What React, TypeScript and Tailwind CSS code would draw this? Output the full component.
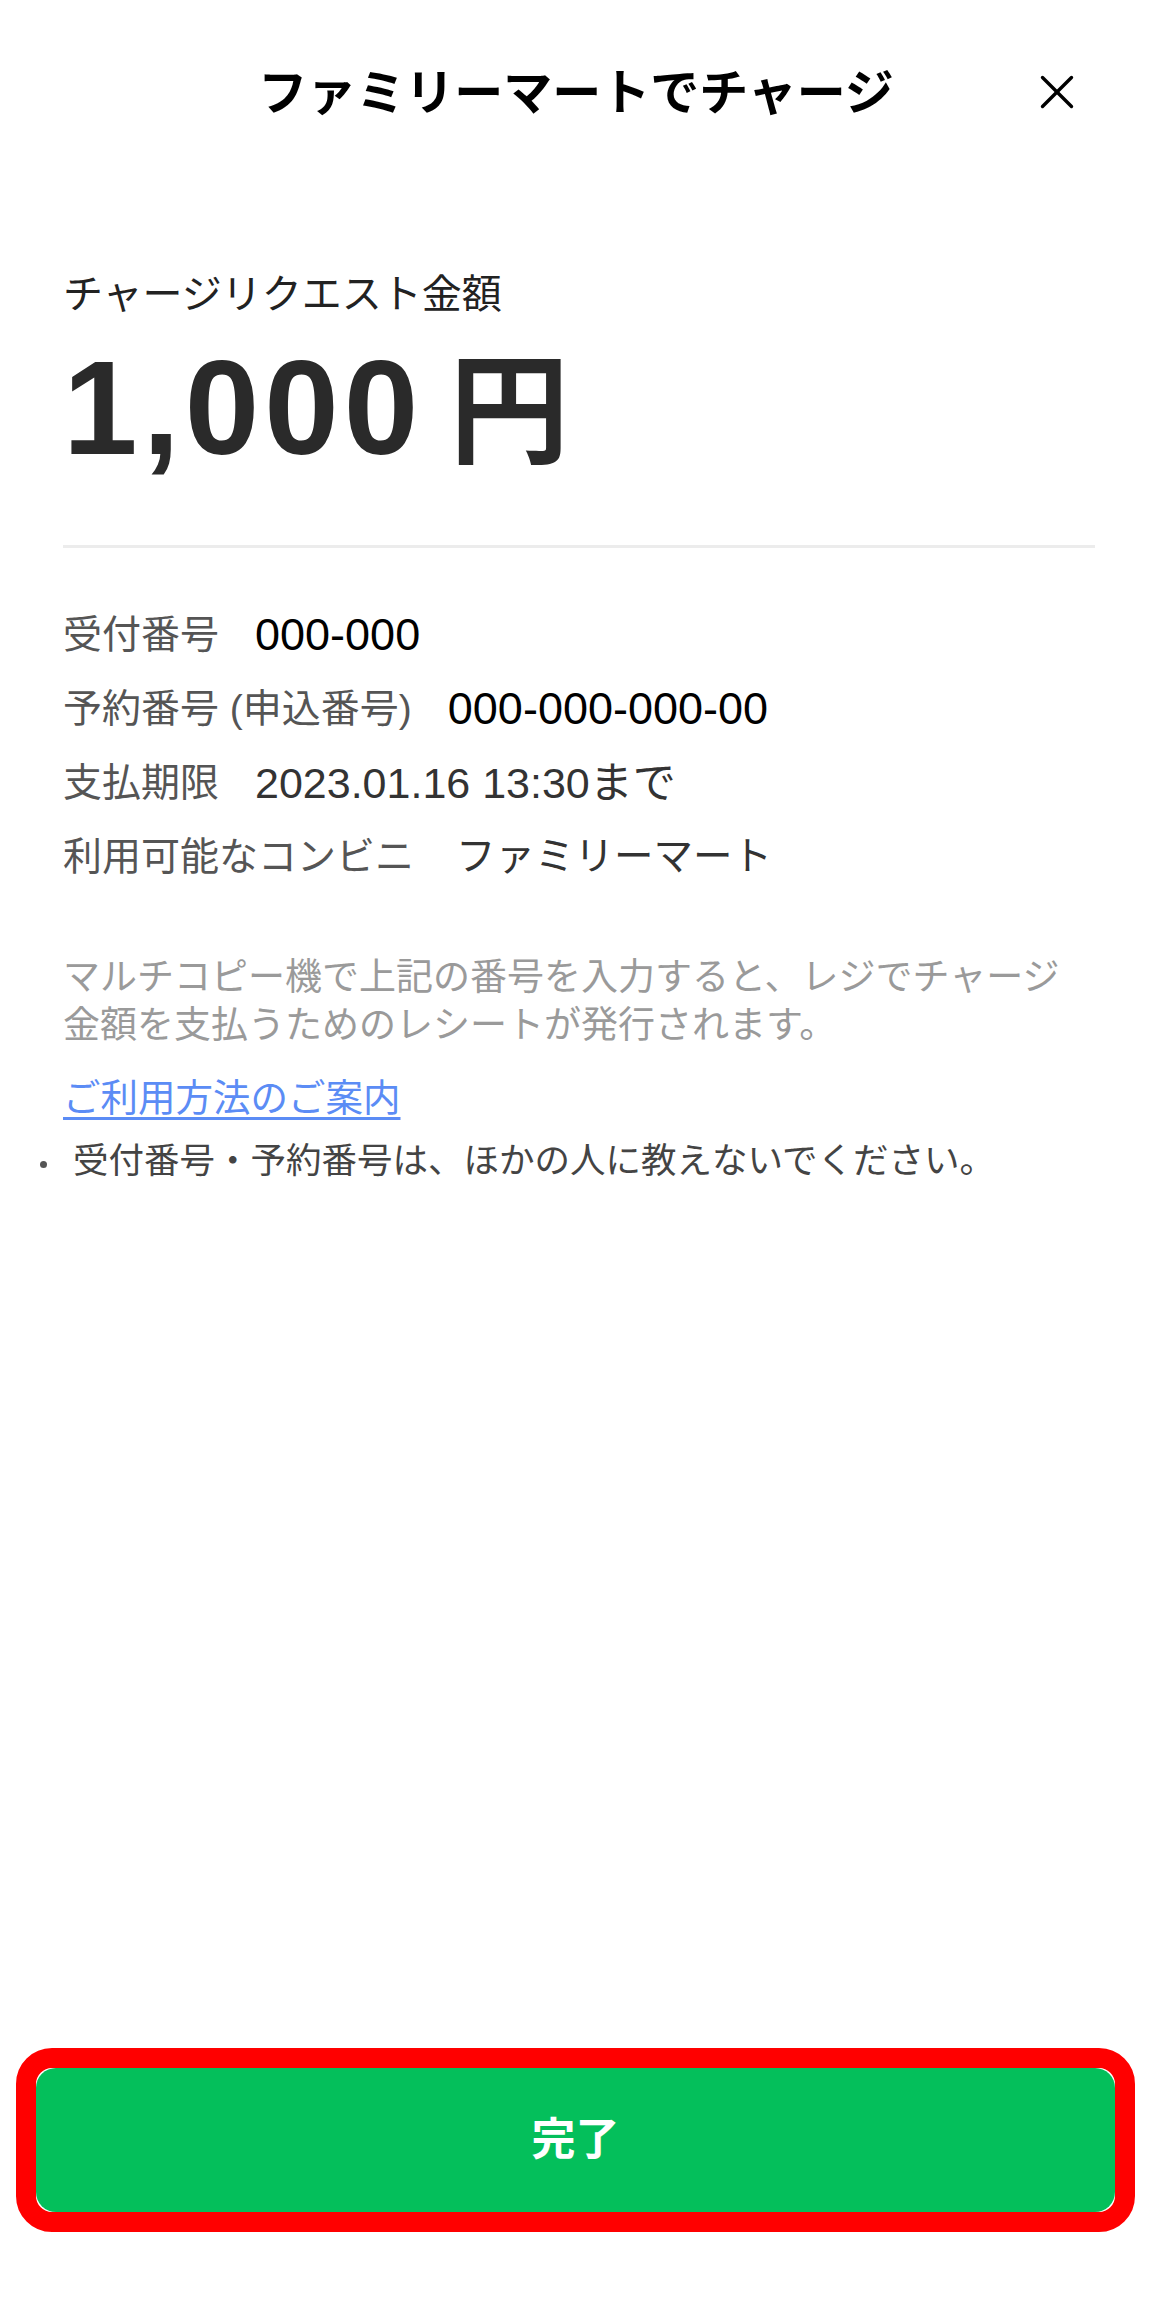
import { X } from 'lucide-react'

const font = 'font-["Liberation_Sans","Noto_Sans_CJK_JP",sans-serif]'

export default function App() {
  return (
    <div className={`${font} flex min-h-[2318px] flex-col bg-white text-[#222]`}>
      {/* Header */}
      <header className="relative flex h-[186px] items-center justify-center">
        <h1 className="text-[49px] font-bold leading-none text-black">ファミリーマートでチャージ</h1>
        <button className="absolute right-[66px] top-[63px] flex h-[58px] w-[58px] items-center justify-center text-black">
          <X size={62} strokeWidth={1.4} />
        </button>
      </header>

      {/* Amount */}
      <section className="pl-[63px] pr-[57px]">
        <p className="mt-[84px] text-[40px] leading-[48px] text-[#222]">チャージリクエスト金額</p>
        <p className="mt-[23px] flex h-[134px] items-baseline font-bold leading-none text-[#2a2a2a]">
          <span className="text-[134px] tracking-[5px]">1,000</span>
          <span className="ml-[26px] text-[120px]">円</span>
        </p>
        <div className="mt-[70px] h-[3px] bg-[#ececec]" />

        {/* Details */}
        <dl className="mt-[50px] flex flex-col">
          <div className="flex h-[74px] items-center">
            <dt className="mr-[36px] text-[39px] text-[#555]">受付番号</dt>
            <dd className="text-[45px] text-black">000-000</dd>
          </div>
          <div className="flex h-[74px] items-center">
            <dt className="mr-[36px] text-[39px] text-[#555]">予約番号 (申込番号)</dt>
            <dd className="text-[45px] text-black">000-000-000-00</dd>
          </div>
          <div className="flex h-[74px] items-center">
            <dt className="mr-[36px] text-[39px] text-[#555]">支払期限</dt>
            <dd className="text-[43px] text-[#333]">2023.01.16 13:30まで</dd>
          </div>
          <div className="flex h-[74px] items-center">
            <dt className="mr-[42px] text-[39px] text-[#555]">利用可能なコンビニ</dt>
            <dd className="text-[39.5px] text-[#333]">ファミリーマート</dd>
          </div>
        </dl>

        <p className="mt-[60px] text-[37px] leading-[48px] text-[#9a9a9a]">
          マルチコピー機で上記の番号を入力すると、レジでチャージ
          <br />
          金額を支払うためのレシートが発行されます。
        </p>
        <a href="#" className="mt-[24px] inline-block text-[37.5px] leading-[48px] text-[#5b8cf5] underline decoration-[3px] underline-offset-[6px]">
          ご利用方法のご案内
        </a>
        <div className="-ml-[23px] mt-[15px] flex items-center">
          <span className="mr-[26px] mt-[6px] h-[7px] w-[7px] rounded-full bg-[#555]" />
          <p className="text-[35.5px] leading-[48px] text-[#444]">受付番号・予約番号は、ほかの人に教えないでください。</p>
        </div>
      </section>

      {/* Footer button */}
      <div className="mt-auto px-[16px] pb-[86px] pr-[17px]">
        <div className="rounded-[36px] border-[20px] border-[#ff0000]">
          <button className="flex h-[144px] w-full items-center justify-center rounded-[20px] bg-[#04bf5b] text-[44px] font-bold text-white">
            完了
          </button>
        </div>
      </div>
    </div>
  )
}
